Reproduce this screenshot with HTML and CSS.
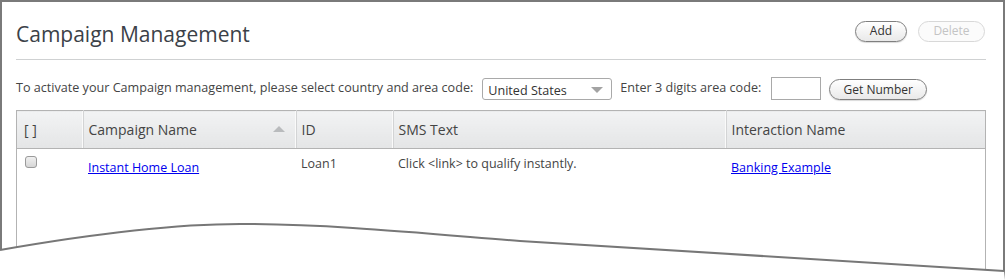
FILE: index.html
```html
<!DOCTYPE html>
<html>
<head>
<meta charset="utf-8">
<link rel="stylesheet" href="styles.css">
</head>
<body>
<div class="page">
  <div class="frame">
    <div class="header">
      <h1 class="title">Campaign Management</h1>
      <div class="actions">
        <button class="pill">Add</button>
        <button class="pill disabled">Delete</button>
      </div>
    </div>
    <div class="controls">
      <span class="label">To activate your Campaign management, please select country and area code:</span>
      <div class="select"><span>United States</span><span class="caret"></span></div>
      <span class="label">Enter 3 digits area code:</span>
      <div class="code-input"></div>
      <button class="pill get">Get Number</button>
    </div>
    <div class="grid-wrap">
      <table class="grid">
        <colgroup>
          <col class="c1"><col class="c2"><col class="c3"><col class="c4"><col class="c5">
        </colgroup>
        <thead>
          <tr>
            <th class="chk-h">[ ]</th>
            <th class="sortable">Campaign Name<span class="sort"></span></th>
            <th>ID</th>
            <th>SMS Text</th>
            <th class="last">Interaction Name</th>
          </tr>
        </thead>
        <tbody>
          <tr>
            <td class="chk"><span class="box"></span></td>
            <td class="lnk"><a href="#">Instant Home Loan</a></td>
            <td>Loan1</td>
            <td>Click &lt;link&gt; to qualify instantly.</td>
            <td class="lnk"><a href="#">Banking Example</a></td>
          </tr>
        </tbody>
      </table>
    </div>
  </div>
  <svg class="tear" width="1005" height="80" viewBox="0 0 1005 80">
    <path d="M0,50 C80,36 170,24 240,24 C330,24 420,33 520,41 L1004,71 L1005,80 L0,80 Z" fill="#fff"/>
    <path d="M0,50 C80,36 170,24 240,24 C330,24 420,33 520,41 L1004,71" fill="none" stroke="#777" stroke-width="2"/>
  </svg>
</div>
</body>
</html>
```
FILE: styles.css
```css
html, body {
  margin: 0;
  padding: 0;
  background: #fff;
}
.page {
  position: relative;
  width: 1005px;
  height: 280px;
  overflow: hidden;
  font-family: "Open Sans", "DejaVu Sans", sans-serif;
  color: #444;
}
.frame {
  box-sizing: border-box;
  width: 1005px;
  height: 280px;
  border: 2px solid #7a7a7a;
  border-bottom: none;
  padding: 0 17px 0 14px;
}
.header {
  height: 58px;
  box-sizing: border-box;
  border-bottom: 1px solid #cfd1d2;
  display: flex;
  align-items: center;
  justify-content: space-between;
  padding-top: 5px;
}
.title {
  margin: 2px 0 0 0;
  font-weight: normal;
  font-size: 21px;
  color: #3b4148;
  letter-spacing: 0;
}
.actions {
  display: flex;
  gap: 11px;
  margin-top: -4px;
  margin-right: 1px;
}
.pill {
  font-family: inherit;
  height: 21px;
  box-sizing: border-box;
  border: 1px solid #7f7f7f;
  border-radius: 11px;
  background: linear-gradient(#ffffff, #e9e9e9);
  box-shadow: 0 1px 1px rgba(0,0,0,0.15);
  color: #333;
  font-size: 12px;
  padding: 0;
  line-height: 18px;
}
.actions .pill { width: 52px; }
.actions .pill.disabled {
  width: 67px;
  border-color: #d8d8d8;
  color: #c4c4c4;
  background: #fbfbfb;
  box-shadow: none;
}
.controls {
  display: flex;
  align-items: center;
  gap: 8px;
  padding: 18px 0 10px;
  font-size: 12.6px;
}
.label { white-space: nowrap; margin-top: -4px; }
.label + .select { margin-left: 1px; }
.select {
  box-sizing: border-box;
  width: 130px;
  height: 22px;
  border: 1px solid #a9a9a9;
  border-radius: 3px;
  display: flex;
  align-items: center;
  justify-content: space-between;
  padding: 2px 8px 0 5px;
  color: #333;
}
.code-input {
  box-sizing: border-box;
  width: 50px;
  height: 23px;
  border: 1px solid #a9a9a9;
  margin-top: -1px;
  margin-left: 2px;
}
.caret {
  width: 0; height: 0;
  border-left: 6px solid transparent;
  border-right: 6px solid transparent;
  border-top: 6px solid #a3a3a3;
}
.get { width: 98px; margin-top: 1px; }
.grid-wrap {
  border-left: 1px solid #b3b3b3;
  border-right: 1px solid #b3b3b3;
  height: 200px;
}
.grid {
  width: 100%;
  border-collapse: collapse;
  table-layout: fixed;
  font-size: 12.5px;
}
.c1 { width: 66px; }
.c2 { width: 213px; }
.c3 { width: 97px; }
.c4 { width: 333px; }
.c5 { width: auto; }
.grid th {
  height: 38px;
  box-sizing: border-box;
  padding: 0 0 0 5px;
  text-align: left;
  font-weight: normal;
  font-size: 14px;
  color: #444;
  background: linear-gradient(#f2f3f4, #e4e5e6);
  border-top: 1px solid #b3b3b3;
  border-bottom: 1px solid #b3b3b3;
  border-right: 1px solid #d3d4d5;
  box-shadow: inset -1px 0 0 #fafafa;
}
.grid th.last { border-right: none; box-shadow: none; }
.grid th.chk-h { padding-left: 7px; }
.sortable { position: relative; }
.sort {
  position: absolute;
  right: 11px;
  top: 15px;
  width: 0; height: 0;
  border-left: 6px solid transparent;
  border-right: 6px solid transparent;
  border-bottom: 6px solid #b9bbbd;
}
.grid td {
  vertical-align: top;
  padding: 6px 0 0 5px;
  color: #444;
}
.grid td.lnk { padding-top: 10px; }
.grid td.chk { padding: 7px 0 0 8px; }
.grid a { color: #0000ee; text-decoration: underline; }
.box {
  display: block;
  width: 12px;
  height: 12px;
  box-sizing: border-box;
  border: 1px solid #9a9a9a;
  border-radius: 3px;
  background: linear-gradient(#f0f0f0, #d6d6d6);
}
.tear {
  position: absolute;
  left: 0;
  top: 200px;
}
```
